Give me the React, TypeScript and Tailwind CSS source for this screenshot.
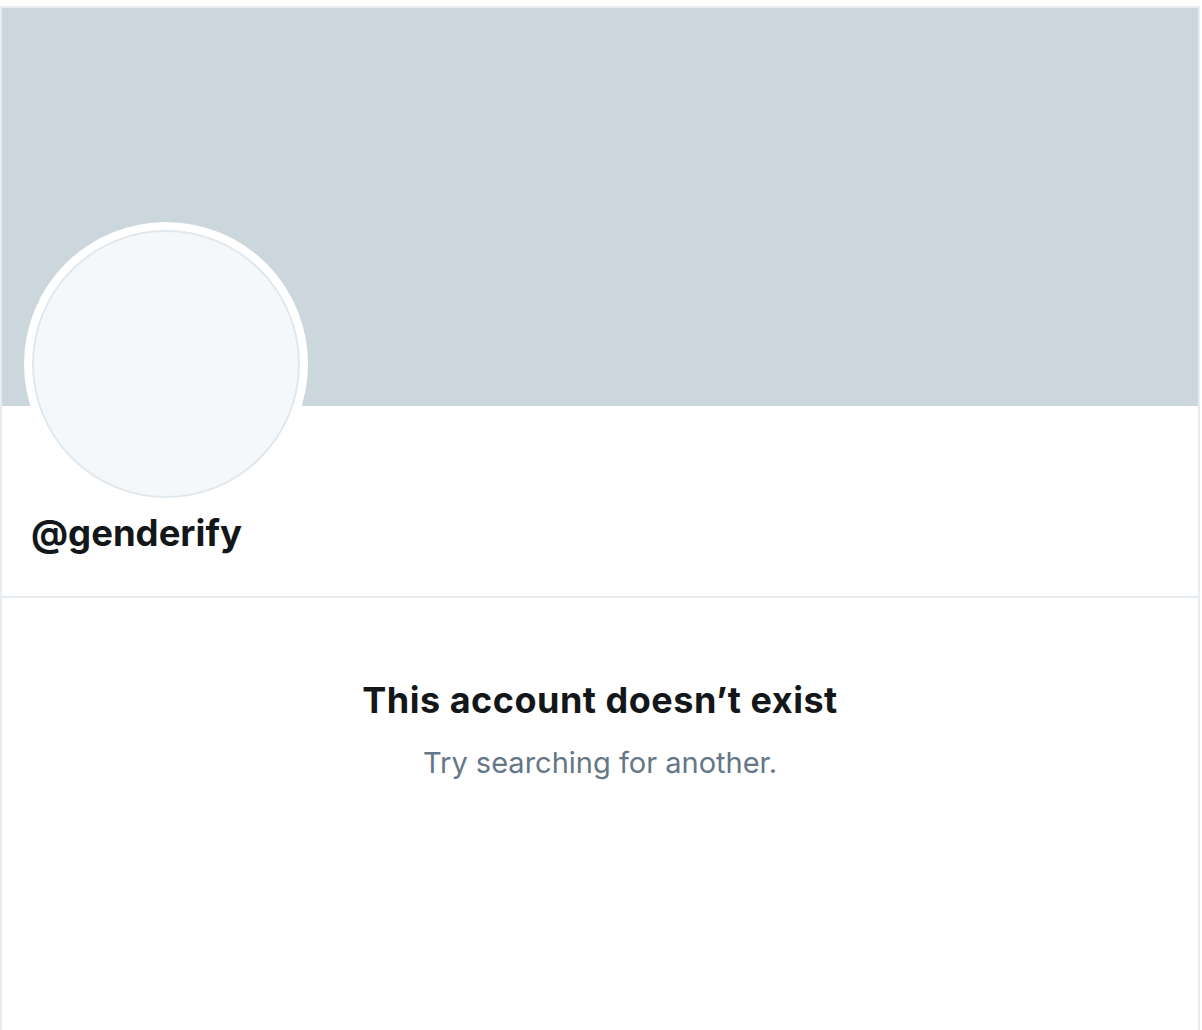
export default function App() {
  return (
    <div className="min-h-screen bg-white pt-[6px] font-['Inter','Liberation_Sans',sans-serif] text-[#14171a]">
      <main className="w-[1200px] min-h-[1024px] border-x-2 border-t-2 border-[#e6ecf0]">
        {/* Banner */}
        <div className="h-[398px] bg-[#ccd6dd]" />

        {/* Profile header */}
        <section className="px-[22px] border-b-2 border-[#e6ecf0]">
          <div className="-mt-[184px] w-[284px] h-[284px] rounded-full bg-white p-2">
            <div className="w-full h-full rounded-full bg-[#f5f8fa] border-2 border-[#e1e8ed]" />
          </div>
          <h2 className="pl-[7px] pt-[3px] pb-[39px] text-[36.5px] leading-[48px] font-bold">
            @genderify
          </h2>
        </section>

        {/* Empty state */}
        <div className="flex flex-col items-center pt-[80px]">
          <h3 className="text-[36px] leading-[44px] font-bold tracking-[0.5px]">
            This account doesn’t exist
          </h3>
          <p className="mt-[23px] text-[29px] leading-[36px] text-[#657786]">
            Try searching for another.
          </p>
        </div>
      </main>
    </div>
  )
}
